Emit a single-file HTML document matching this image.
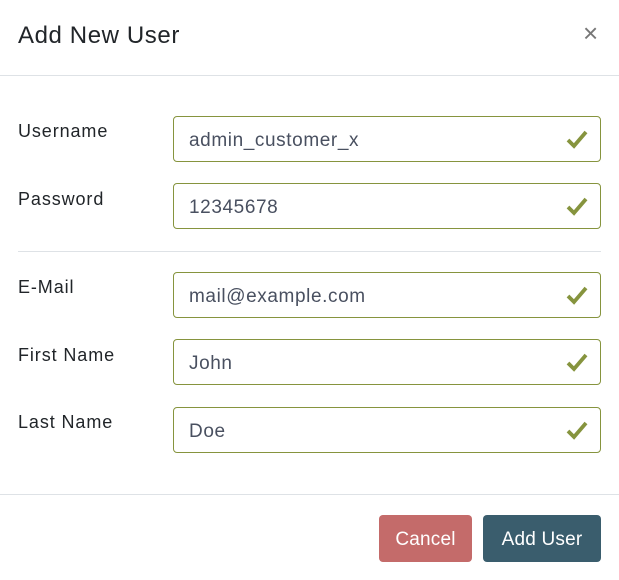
<!DOCTYPE html>
<html><head><style>
body{margin:0;width:619px;height:580px;background:#fff;font-family:"Liberation Sans",sans-serif;position:relative;overflow:hidden;color:#212529}
.t{position:absolute;left:18px;top:22px;font-size:24px;letter-spacing:0.6px;color:#212529}
.x{position:absolute;left:583px;top:20px;font-size:26px;color:#777;line-height:26px}
.hr{position:absolute;height:1px;background:#dee2e6}
.l{position:absolute;left:18px;font-size:18px;letter-spacing:0.9px;color:#212529}
.i{position:absolute;left:173px;width:426px;height:44px;border:1px solid #86943e;border-radius:4px;box-sizing:content-box}
.i span{position:absolute;left:15px;top:13px;font-size:19px;letter-spacing:0.6px;color:#495060}
.i svg{position:absolute;right:12px;top:12px}
.b{position:absolute;top:515px;height:47px;border-radius:4px;color:#fff;font-size:19px;letter-spacing:0.2px;text-align:center;line-height:49px}
</style></head><body>
<div class="t">Add New User</div>
<div class="x">×</div>
<div class="hr" style="left:0;top:75px;width:619px"></div>
<div class="l" style="top:121px">Username</div>
<div class="i" style="top:116px"><span>admin_customer_x</span><svg width="22" height="20" viewBox="0 0 22 20"><path d="M2 11l6 6L20 3" fill="none" stroke="#86943e" stroke-width="3.8"/></svg></div>
<div class="l" style="top:189px">Password</div>
<div class="i" style="top:183px"><span>12345678</span><svg width="22" height="20" viewBox="0 0 22 20"><path d="M2 11l6 6L20 3" fill="none" stroke="#86943e" stroke-width="3.8"/></svg></div>
<div class="hr" style="left:18px;top:251px;width:583px"></div>
<div class="l" style="top:277px">E-Mail</div>
<div class="i" style="top:272px"><span>mail@example.com</span><svg width="22" height="20" viewBox="0 0 22 20"><path d="M2 11l6 6L20 3" fill="none" stroke="#86943e" stroke-width="3.8"/></svg></div>
<div class="l" style="top:345px">First Name</div>
<div class="i" style="top:339px"><span>John</span><svg width="22" height="20" viewBox="0 0 22 20"><path d="M2 11l6 6L20 3" fill="none" stroke="#86943e" stroke-width="3.8"/></svg></div>
<div class="l" style="top:412px">Last Name</div>
<div class="i" style="top:407px"><span>Doe</span><svg width="22" height="20" viewBox="0 0 22 20"><path d="M2 11l6 6L20 3" fill="none" stroke="#86943e" stroke-width="3.8"/></svg></div>
<div class="hr" style="left:0;top:494px;width:619px"></div>
<div class="b" style="left:379px;width:93px;background:#c46b6a">Cancel</div>
<div class="b" style="left:483px;width:118px;background:#3a5d6d">Add User</div>
</body></html>
